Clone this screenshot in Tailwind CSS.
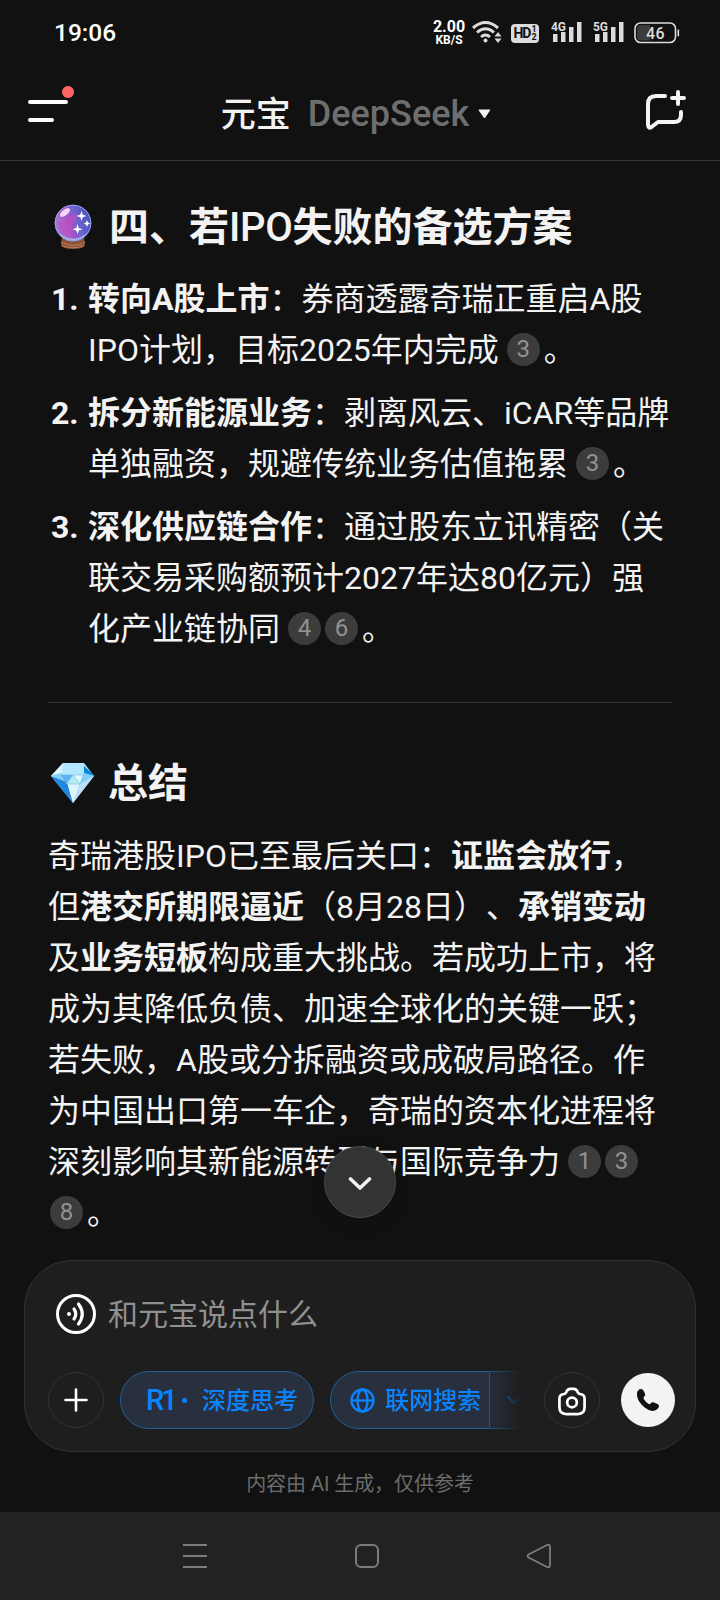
<!DOCTYPE html>
<html lang="zh-CN">
  <head>
    <meta charset="UTF-8" />
    <meta name="viewport" content="width=device-width, initial-scale=1.0" />
    <title>元宝</title>
    <script src="https://cdn.jsdelivr.net/npm/@tailwindcss/browser@4"></script>
  </head>
  <body class="bg-[#111111]">
    <div class="relative flex flex-col w-[720px] h-[1600px] overflow-hidden bg-[#111111] text-[#f3f3f3] font-[Roboto,'Noto_Sans_CJK_SC',sans-serif] [text-spacing-trim:space-all]">
      <!-- Status bar -->
      <div class="flex items-center justify-between h-16 pl-[54px] pr-10 shrink-0">
        <span class="pt-[2px] text-[24.5px] leading-none font-medium text-white">19:06</span>
        <div class="flex items-center">
          <div class="flex flex-col items-center w-8 mr-[7px] pt-[2px] font-bold text-white">
            <span class="text-[16px] leading-[14px]">2.00</span>
            <span class="text-[12px] leading-[12px]">KB/S</span>
          </div>
          <svg class="mr-[9px]" width="30" height="24" viewBox="0 0 30 24" fill="none" stroke="#dcdcdc" stroke-width="3">
            <path d="M1 8Q13.500 -3 26 8" />
            <path d="M5 12.500Q13.500 5 22 12.500" />
            <path d="M9 17Q13.500 13 18 17" />
            <circle cx="13.500" cy="20.500" r="2" fill="#dcdcdc" stroke="none" />
            <path d="M26 12l3.500 4.500h-7zM26 23l3.500-4.500h-7z" fill="#dcdcdc" stroke="none" />
          </svg>
          <div class="flex items-center justify-center w-7 h-[19px] mr-3 mt-[2px] rounded-[4px] bg-[#dcdcdc] text-[#111111] font-bold">
            <span class="text-[14px] leading-none tracking-[-1px]">HD</span>
            <span class="flex flex-col ml-[1px] text-[9px] leading-[8px]"><span>1</span><span>2</span></span>
          </div>
          <svg class="mr-[10px]" width="32" height="24" viewBox="0 0 32 24" fill="#dcdcdc">
            <text x="0" y="10.500" font-size="13" font-weight="700" textLength="15" lengthAdjust="spacingAndGlyphs">4G</text>
            <path d="M2 14H6.500V22H2zM10 12H14.500V22H10zM18 7H22.500V22H18zM26 2H30.500V22H26z" />
          </svg>
          <svg class="mr-[9px]" width="32" height="24" viewBox="0 0 32 24" fill="#dcdcdc">
            <text x="0" y="10.500" font-size="13" font-weight="700" textLength="15" lengthAdjust="spacingAndGlyphs">5G</text>
            <path d="M2 14H6.500V22H2zM10 12H14.500V22H10zM18 7H22.500V22H18zM26 2H30.500V22H26z" />
          </svg>
          <svg width="46" height="22" viewBox="0 0 46 22" class="mt-[1px]">
            <rect x="1" y="1" width="40.500" height="19.500" rx="5.500" fill="none" stroke="#dcdcdc" stroke-width="1.600" />
            <path d="M7 3H16V18.500H7a4 4 0 0 1-4-4V7a4 4 0 0 1 4-4z" fill="#3c3c3c" />
            <rect x="43.500" y="7.500" width="1.600" height="7" rx=".8" fill="#dcdcdc" />
            <text x="21.500" y="16.500" font-size="16" font-weight="500" fill="#dcdcdc" text-anchor="middle" letter-spacing=".5">46</text>
          </svg>
        </div>
      </div>

      <!-- Header -->
      <header class="flex items-center justify-between h-[97px] pl-7 pr-[33px] shrink-0 border-b border-[#323232]">
        <svg width="48" height="52" viewBox="0 -6 48 52" class="-mt-1">
          <path d="M2 12H38M2 30H24" stroke="#ffffff" stroke-width="4" stroke-linecap="round" />
          <circle cx="40" cy="2" r="6" fill="#ff6767" />
        </svg>
        <div class="flex items-center mt-1 -ml-[9px] text-[35px] leading-none font-medium">
          <span class="pt-[2px]">元宝</span>
          <span class="ml-[17px] text-[36px] text-[#6e6e6e]">DeepSeek</span>
          <svg class="ml-[9px]" width="13" height="10" viewBox="0 0 13 10" fill="#f3f3f3">
            <path d="M1.500 0.500h10q1 .2 .5 1L7.300 8.500q-.8 1-1.600 0L.8 1.500q-.4-.8.700-1z" />
          </svg>
        </div>
        <svg class="-mt-[5px]" width="42" height="42" viewBox="0 0 42 42" fill="none" stroke="#f3f3f3" stroke-width="4" stroke-linecap="round" stroke-linejoin="round">
          <path d="M20 7H11Q3 7 3 15V35.500Q3 40 6.500 38L13 33H29Q36 33 36 26V23" />
          <path d="M33 3V15M27 9H39" />
        </svg>
      </header>

      <!-- Answer -->
      <main class="grow px-12 pt-10 text-[32px] leading-[51px] whitespace-nowrap">
        <h2 class="flex items-center h-[52px] text-[40px] font-bold">
          <svg class="ml-[6px] mr-[17px] shrink-0" width="38" height="46" viewBox="0 0 38 46">
            <defs>
              <linearGradient id="ball" x1="0" y1="0.600" x2="1" y2="0.300">
                <stop offset="0" stop-color="#a77bd8" />
                <stop offset="0.450" stop-color="#a54fc4" />
                <stop offset="0.550" stop-color="#7367d2" />
                <stop offset="1" stop-color="#4450b8" />
              </linearGradient>
            </defs>
            <path d="M8 33H30L31 41Q30 45 19 45Q8 45 7 41z" fill="#8b5438" />
            <path d="M7 38Q19 45 31 38M8 41.500Q19 46 30 41.500" stroke="#bd7a55" stroke-width="1" fill="none" />
            <circle cx="19" cy="19" r="18.300" fill="url(#ball)" />
            <path d="M17 12Q28 5 22 16Q12 24 17 34Q3 30 5 17Q9 22 17 12z" fill="#c14fc0" opacity=".65" />
            <path d="M5 29Q19 40 33 29Q28 37 19 37.300Q10 37 5 29z" fill="#a9c1f5" opacity=".8" />
            <circle cx="19" cy="19" r="17.800" fill="none" stroke="#8fa4ec" />
            <ellipse cx="11" cy="8.500" rx="6" ry="2.800" transform="rotate(-38 11 8.500)" fill="#f3d7fb" />
            <path d="M27.500 7l1.200 3.800 3.800 1.200-3.800 1.200-1.200 3.800-1.200-3.800-3.800-1.200 3.800-1.200zM33 16l1 2.500 2.500 1-2.500 1-1 2.500-1-2.500-2.500-1 2.500-1zM23.500 20l1.200 4 3.800 1.200-3.800 1.200-1.200 3.600-1.200-3.600-3.800-1.200 3.800-1.200z" fill="#ffffff" />
          </svg>
          四、若<span class="font-medium tracking-[-0.300px]">IPO</span>失败的备选方案
        </h2>

        <ol class="flex flex-col gap-3 mt-[21px]">
          <li class="flex">
            <span class="w-10 pl-[3px] shrink-0 font-bold">1.</span>
            <p><b>转向A股上市</b>：券商透露奇瑞正重启A股<br />IPO计划，目标2025年内完成<span class="inline-flex items-center justify-center size-[33px] ml-2 mr-1 rounded-full bg-[#3c3c3c] text-2xl leading-none text-[#929292] align-[4px]">3</span>。</p>
          </li>
          <li class="flex">
            <span class="w-10 pl-[3px] shrink-0 font-bold">2.</span>
            <p><b>拆分新能源业务</b>：剥离风云、iCAR等品牌<br />单独融资，规避传统业务估值拖累<span class="inline-flex items-center justify-center size-[33px] ml-2 mr-1 rounded-full bg-[#3c3c3c] text-2xl leading-none text-[#929292] align-[4px]">3</span>。</p>
          </li>
          <li class="flex">
            <span class="w-10 pl-[3px] shrink-0 font-bold">3.</span>
            <p><b>深化供应链合作</b>：通过股东立讯精密（关<br />联交易采购额预计2027年达80亿元）强<br />化产业链协同<span class="inline-flex items-center justify-center size-[33px] ml-2 mr-1 rounded-full bg-[#3c3c3c] text-2xl leading-none text-[#929292] align-[4px]">4</span><span class="inline-flex items-center justify-center size-[33px] mr-1 rounded-full bg-[#3c3c3c] text-2xl leading-none text-[#929292] align-[4px]">6</span>。</p>
          </li>
        </ol>

        <hr class="mt-[47px] border-[#323232]" />

        <h2 class="flex items-center h-[52px] mt-[54px] text-[40px] font-bold">
          <svg class="ml-[2px] mr-[12px] shrink-0" width="46" height="42" viewBox="0 0 46 42">
            <path d="M13 1H34L44 14L23 41L1 14z" fill="#b3e5fc" />
            <path d="M1 14L17 20L23 41z" fill="#1e88e0" />
            <path d="M17 20H30L23 41z" fill="#e1f5fe" />
            <path d="M44 14L30 20L23 41z" fill="#b9dffa" />
            <path d="M1 14L13 1L11 13z" fill="#e1f5fe" />
            <path d="M1 14L11 11L17 20z" fill="#81cffa" />
            <path d="M11 13H23L17 22z" fill="#5fb0f0" />
            <path d="M23 13L30 22H16z" fill="#b2ebf2" />
            <path d="M23 13H34L30 22z" fill="#e1f5fe" />
            <path d="M34 11L44 14L30 22z" fill="#81cffa" />
            <path d="M34 4L45 14L34 11z" fill="#0288d1" />
            <path d="M11 13H34M11 13L17 22L23 13L30 22L34 12M17 22H30" stroke="#6aaed6" stroke-width=".5" fill="none" />
          </svg>
          总结
        </h2>

        <p class="mt-[22px]">
          奇瑞港股IPO已至最后关口：<b>证监会放行</b>，<br />
          但<b>港交所期限逼近</b>（8月28日）、<b>承销变动</b><br />
          及<b>业务短板</b>构成重大挑战。若成功上市，将<br />
          成为其降低负债、加速全球化的关键一跃；<br />
          若失败，A股或分拆融资或成破局路径。作<br />
          为中国出口第一车企，奇瑞的资本化进程将<br />
          深刻影响其新能源转型与国际竞争力<span class="inline-flex items-center justify-center size-[33px] ml-2 mr-1 rounded-full bg-[#3c3c3c] text-2xl leading-none text-[#929292] align-[4px]">1</span><span class="inline-flex items-center justify-center size-[33px] rounded-full bg-[#3c3c3c] text-2xl leading-none text-[#929292] align-[4px]">3</span><br />
          <span class="inline-flex items-center justify-center size-[33px] ml-[2px] mr-1 rounded-full bg-[#3c3c3c] text-2xl leading-none text-[#929292] align-[4px]">8</span>。
        </p>
      </main>

      <!-- Scroll to bottom -->
      <button class="absolute left-[324px] top-[1146px] flex items-center justify-center size-[72px] rounded-full bg-[#333333] border border-[#4a4a4a] shadow-[0_4px_20px_rgba(0,0,0,0.1)]">
        <svg class="mt-1" width="24" height="16" viewBox="0 0 24 16" fill="none" stroke="#f3f3f3" stroke-width="3.600" stroke-linecap="round" stroke-linejoin="round">
          <path d="M2.500 3L12 12L21.500 3" />
        </svg>
      </button>

      <!-- Composer -->
      <section class="flex flex-col h-[192px] mx-6 shrink-0 rounded-[48px] border border-[#323232] bg-[#1e1e1e]">
        <div class="flex items-center h-[42px] mt-8 pl-[30px]">
          <svg width="42" height="42" viewBox="0 0 42 42" fill="none" stroke="#ffffff" stroke-width="3.200" stroke-linecap="round">
            <circle cx="21" cy="21" r="18.500" stroke-width="3" />
            <circle cx="14" cy="21" r="2" fill="#ffffff" stroke="none" />
            <path d="M19 16Q22.500 21 19 26" />
            <path d="M23.500 11Q31 21 23.500 31" />
          </svg>
          <span class="ml-[11px] pt-[2px] text-[30px] leading-none text-[#909090]">和元宝说点什么</span>
        </div>
        <div class="flex items-center h-[58px] mt-[36px] pl-[23px]">
          <button class="flex items-center justify-center size-14 shrink-0 rounded-full border border-[#343434]">
            <svg width="24" height="24" viewBox="0 0 24 24" stroke="#ffffff" stroke-width="2.600" stroke-linecap="round">
              <path d="M12 1.500V22.500M1.500 12H22.500" />
            </svg>
          </button>
          <div class="flex w-[418px] h-[58px] pl-4 shrink-0 overflow-hidden text-2xl leading-none font-medium text-[#0a84ff] [mask-image:linear-gradient(to_right,black_91%,transparent_100%)]">
            <button class="flex items-center w-[194px] h-[58px] pl-[25px] shrink-0 rounded-full border border-[#215f9c] bg-[#283040]">
              <span class="w-[25px] text-[29px] tracking-[-3px] whitespace-nowrap">R1</span>
              <span class="size-[5px] ml-[11px] mr-[15px] rounded-full bg-[#0a84ff]"></span>
              <span class="pt-[2px]">深度思考</span>
            </button>
            <button class="flex items-center w-[230px] h-[58px] ml-4 pl-[19px] shrink-0 rounded-l-full border border-[#215f9c] bg-[#283040]">
              <svg width="25" height="25" viewBox="0 0 25 25" fill="none" stroke="#0a84ff" stroke-width="2.300">
                <circle cx="12.500" cy="12.500" r="11" />
                <ellipse cx="12.500" cy="12.500" rx="5" ry="11" />
                <path d="M1.500 12.500H23.500" />
              </svg>
              <span class="ml-[10px] pt-[2px]">联网搜索</span>
              <span class="h-[58px] ml-[8px] border-l border-[#215f9c]"></span>
              <svg class="ml-[16px] shrink-0" width="16" height="10" viewBox="0 0 16 10" fill="none" stroke="#0a84ff" stroke-width="2" stroke-linecap="round">
                <path d="M2 2L8 8L14 2" />
              </svg>
            </button>
          </div>
          <button class="flex items-center justify-center size-14 ml-[22px] shrink-0 rounded-full border border-[#343434]">
            <svg class="mt-[2px]" width="30" height="29" viewBox="0 0 30 30" fill="none" stroke="#ffffff" stroke-width="2.800" stroke-linejoin="round">
              <path d="M2 12Q2 8 6 7.500Q8 7.300 9 5.500Q10.500 2 13 2H17Q19.500 2 21 5.500Q22 7.300 24 7.500Q28 8 28 12V21Q28 28 21 28H9Q2 28 2 21z" />
              <circle cx="15" cy="16" r="5" />
            </svg>
          </button>
          <button class="flex items-center justify-center size-[54px] ml-[21px] shrink-0 rounded-full bg-[#f3f3f3]">
            <svg width="24" height="24" viewBox="0 0 24 24" fill="#111111">
              <path d="M3 1.500Q5.500 0 7.200 2.200L9 5.500Q9.800 7.300 8.200 8.500Q7 9.500 7.800 11Q9.500 14 12.300 15.800Q13.800 16.700 14.800 15.300Q16 13.700 18 14.400L21.500 16Q24 17.500 22.300 20Q20 23.500 15.500 22.800Q10 21.500 5.500 16.500Q1 11.500 1 6.500Q1 3 3 1.500z" />
            </svg>
          </button>
        </div>
      </section>
      <div class="flex items-center justify-center h-[60px] shrink-0 pt-1 text-xl leading-none text-[#6c6c6c] whitespace-nowrap">
        <span class="tracking-[-0.050px]">内容由 AI 生成，仅供参考</span>
      </div>

      <!-- System navigation -->
      <nav class="flex items-center h-[88px] pl-[182px] shrink-0 bg-[#222222]">
        <svg width="26" height="26" viewBox="0 0 26 26" stroke="#7c7c7c" stroke-width="2">
          <path d="M1 2H25M1 13H25M1 24H25" />
        </svg>
        <svg class="ml-[146px]" width="26" height="26" viewBox="0 0 26 26" fill="none" stroke="#7c7c7c" stroke-width="2">
          <rect x="2" y="2" width="22" height="22" rx="5" />
        </svg>
        <svg class="ml-[146px]" width="26" height="26" viewBox="0 0 26 26" fill="none" stroke="#7c7c7c" stroke-width="1.800">
          <path d="M2.500 11.500L21 2Q24 1 24 4V22Q24 25 21 24L2.500 14.500Q.5 13 2.500 11.500z" />
        </svg>
      </nav>
    </div>
  </body>
</html>
